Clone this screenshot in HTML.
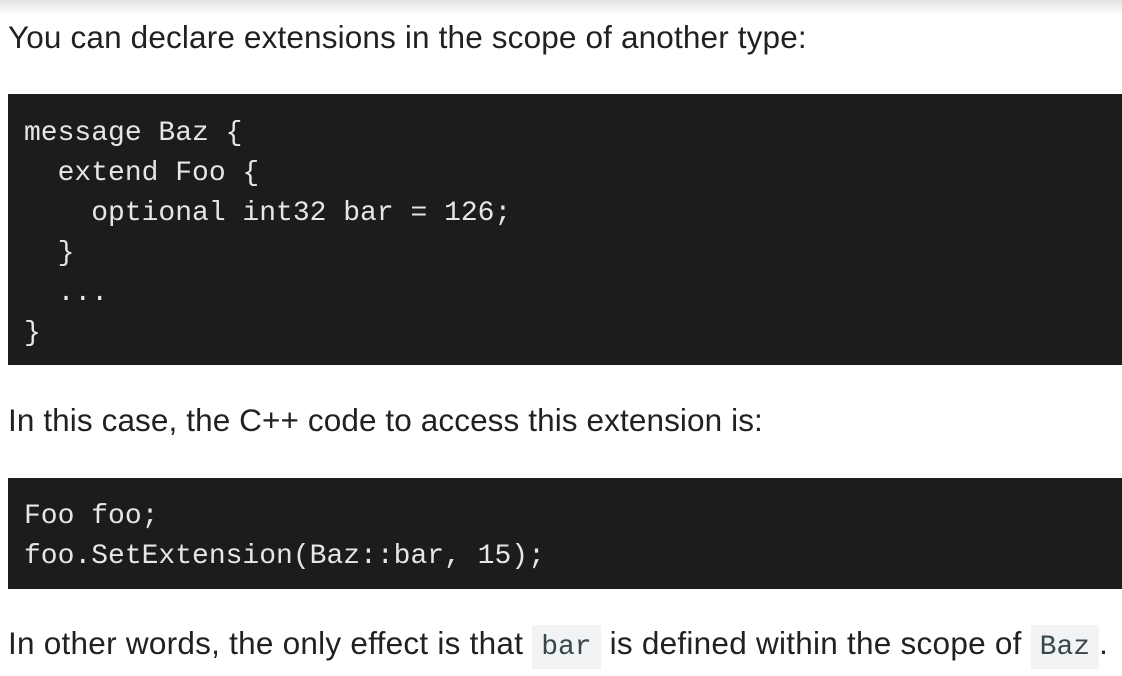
<!DOCTYPE html>
<html><head><meta charset="utf-8"><style>
html,body{margin:0;padding:0;background:#fff;width:1122px;height:676px;overflow:hidden;position:relative}
.sh{position:absolute;left:0;top:0;width:1122px;height:16px;background:linear-gradient(#e4e4e4,#fff)}
.t{position:absolute;left:8px;font-family:"Liberation Sans",sans-serif;color:#202124;font-size:31.5px;white-space:nowrap}
.cb{position:absolute;left:8px;width:1114px;background:#1c1c1c}
.cb pre{margin:0;position:absolute;left:16px;font-family:"Liberation Mono",monospace;font-size:28px;line-height:40px;color:#e6e6e6}
.ic{font-family:"Liberation Mono",monospace;background:#f1f3f4;color:#37474f;font-size:28px;padding:7px 9px 6px;letter-spacing:0}
</style></head><body>
<div class="sh"></div>
<div class="t" style="top:19px;letter-spacing:0.15px">You can declare extensions in the scope of another type:</div>
<div class="cb" style="top:94px;height:271px"><pre style="top:20px">message Baz {
  extend Foo {
    optional int32 bar = 126;
  }
  ...
}</pre></div>
<div class="t" style="top:402px;letter-spacing:0.1px">In this case, the C++ code to access this extension is:</div>
<div class="cb" style="top:478px;height:111px"><pre style="top:19px">Foo foo;
foo.SetExtension(Baz::bar, 15);</pre></div>
<div class="t" style="top:625px;letter-spacing:0.25px">In other words, the only effect is that <span class="ic">bar</span> is defined within the scope of <span class="ic">Baz</span>.</div>
</body></html>
